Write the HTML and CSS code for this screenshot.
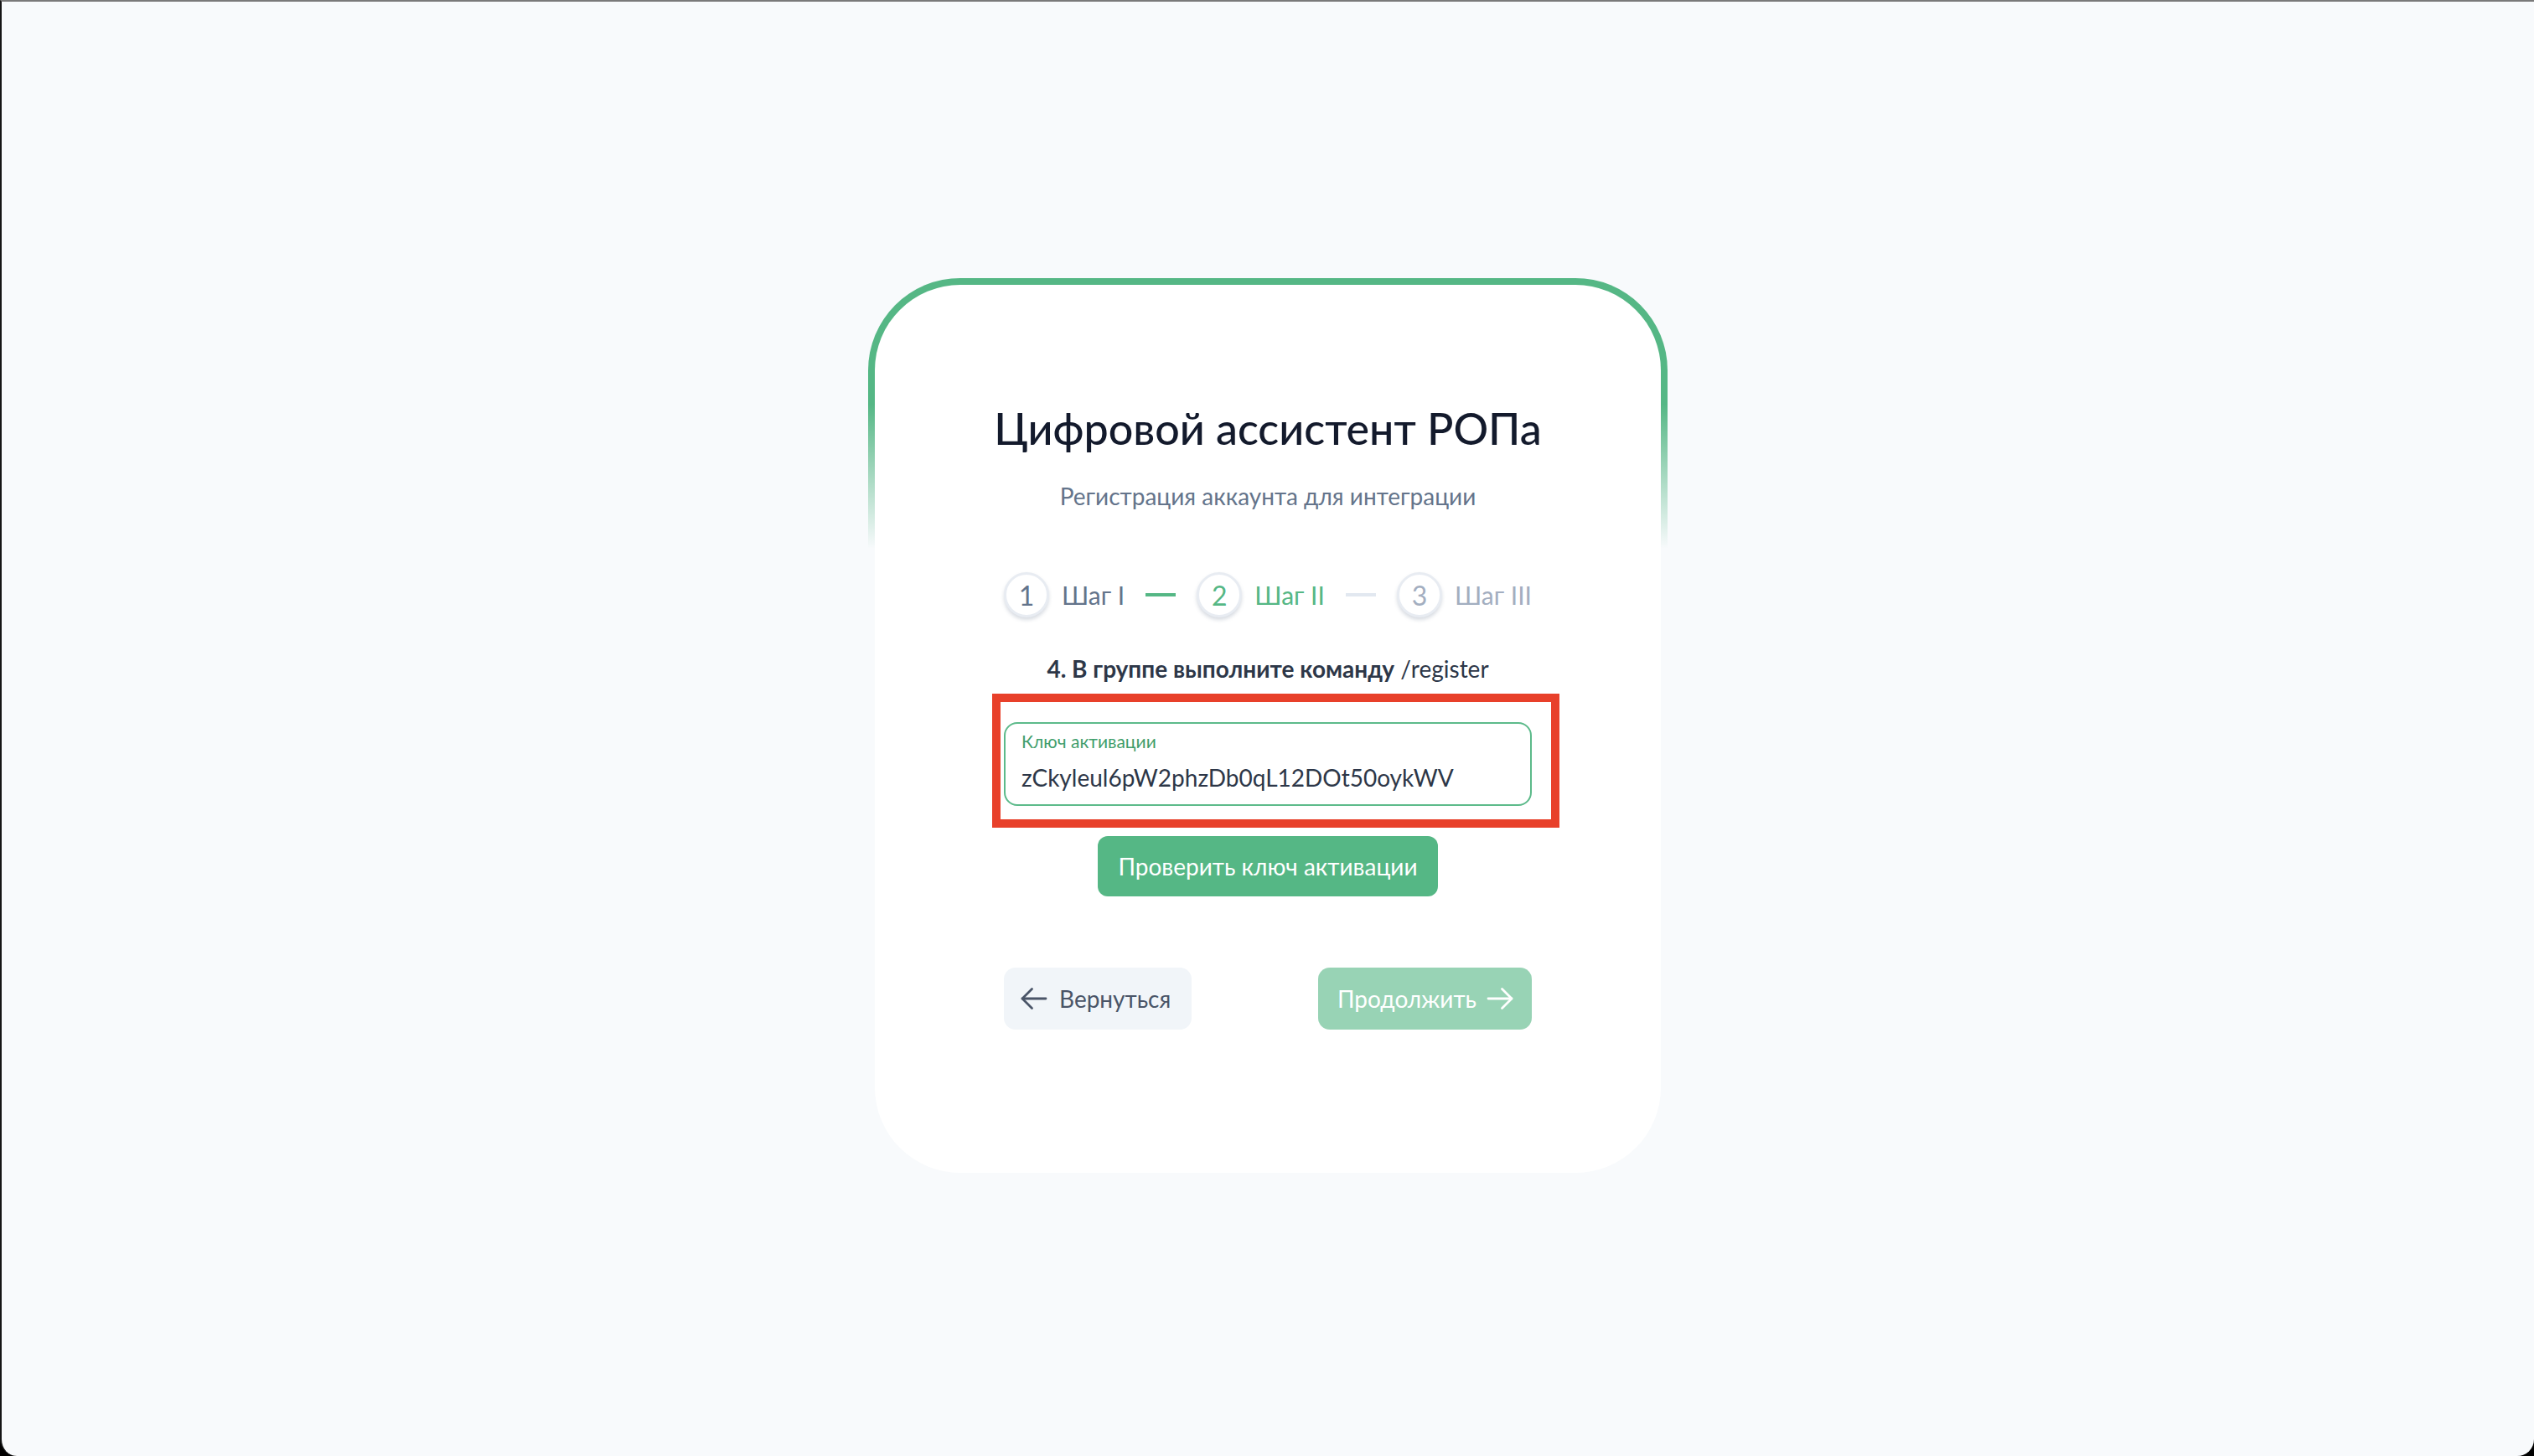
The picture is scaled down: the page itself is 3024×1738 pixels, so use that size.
FILE: index.html
```html
<!DOCTYPE html>
<html lang="ru">
<head>
  <meta charset="UTF-8">
  <title>Цифровой ассистент РОПа - Регистрация</title>
  <link rel="stylesheet" href="styles.css">
</head>
<body>
  <div class="window">
    <div class="frame">
      <div class="card">
        <h1 class="title">Цифровой ассистент РОПа</h1>
        <p class="subtitle">Регистрация аккаунта для интеграции</p>

        <div class="steps">
          <div class="step done">
            <span class="step-num">1</span>
            <span class="step-label">Шаг I</span>
          </div>
          <span class="step-line active"></span>
          <div class="step current">
            <span class="step-num">2</span>
            <span class="step-label">Шаг II</span>
          </div>
          <span class="step-line"></span>
          <div class="step todo">
            <span class="step-num">3</span>
            <span class="step-label">Шаг III</span>
          </div>
        </div>

        <p class="instruction"><b>4. В группе выполните команду</b> /register</p>

        <div class="field">
          <label class="field-label" for="activationKey">Ключ активации</label>
          <input class="field-input" id="activationKey" type="text" value="zCkyleul6pW2phzDb0qL12DOt50oykWV">
          <span class="highlight"></span>
        </div>

        <button class="btn btn-check">Проверить ключ активации</button>

        <div class="nav">
          <button class="btn btn-back">
            <svg width="32" height="32" viewBox="0 0 32 32" fill="none" stroke="currentColor" stroke-width="2.8" stroke-linecap="round" stroke-linejoin="round"><path d="M30 16H2"/><path d="M13.5 4.5L2 16l11.5 11.5"/></svg>
            Вернуться
          </button>
          <button class="btn btn-next" disabled>
            Продолжить
            <svg width="32" height="32" viewBox="0 0 32 32" fill="none" stroke="currentColor" stroke-width="2.8" stroke-linecap="round" stroke-linejoin="round"><path d="M2 16h28"/><path d="M18.5 4.5L30 16 18.5 27.5"/></svg>
          </button>
        </div>
      </div>
    </div>
  </div>
</body>
</html>
```

FILE: styles.css
```css
html, body {
  margin: 0;
  height: 100%;
  background: #000;
}
body {
  font-family: Lato, "Noto Sans", sans-serif;
  color: #2d3748;
}
.window {
  height: 100%;
  box-sizing: border-box;
  background: #f8fafc;
  border-top: 2px solid #7a7a7a;
  border-left: 2px solid #151515;
  border-radius: 0 0 20px 20px;
  display: flex;
  align-items: center;
  justify-content: center;
}

/* card with fading green edge */
.frame {
  padding: 8px;
  border-radius: 110px;
  background: linear-gradient(180deg, #55b785 14%, rgba(85, 183, 133, 0) 30%);
}
.card {
  width: 938px;
  box-sizing: border-box;
  padding: 141px 154px 171px;
  background: #fff;
  border-radius: 102px;
  display: flex;
  flex-direction: column;
  align-items: center;
}
.title {
  margin: 0;
  font-size: 52px;
  line-height: 60px;
  font-weight: 500;
  color: #131a2c;
  white-space: nowrap;
  text-align: center;
}
.subtitle {
  margin: 31px 0 0;
  font-size: 28px;
  line-height: 40px;
  color: #64748b;
}

.steps {
  margin-top: 70px;
  height: 56px;
  width: 100%;
  display: flex;
  align-items: center;
  justify-content: space-between;
}
.step { display: flex; align-items: center; gap: 15px; }
.step-num {
  width: 54px; height: 54px;
  box-sizing: border-box;
  border: 3px solid #e8ecf2;
  border-radius: 50%;
  box-shadow: 0 3px 4px rgba(100, 116, 139, 0.25);
  display: flex; align-items: center; justify-content: center;
  font-size: 32px;
  background: #fff;
}
.step-label { font-size: 30px; }
.step-line { width: 36px; height: 4px; background: #e2e8f0; }
.step-line.active { background: #55b785; }
.done { color: #64748b; }
.current { color: #55b785; }
.todo { color: #a3aec0; }

.instruction {
  margin: 40px 0 0;
  font-size: 28px;
  line-height: 40px;
  color: #2d3748;
}
.instruction b { font-weight: 700; }

.field {
  position: relative;
  margin-top: 44px;
  width: 100%;
  height: 100px;
  box-sizing: border-box;
  border: 2px solid #5cba8a;
  border-radius: 16px;
  padding: 8px 18px 12px 19px;
  display: flex;
  flex-direction: column;
}
.field-label {
  font-size: 21px;
  line-height: 26px;
  color: #3f9e6c;
  margin-bottom: 10px;
}
.field-input {
  border: none;
  outline: none;
  padding: 0;
  font-family: inherit;
  font-size: 28px;
  line-height: 40px;
  height: 40px;
  color: #2d3748;
  background: transparent;
}
.highlight {
  position: absolute;
  top: -36px; left: -16px; right: -35px; bottom: -28px;
  border: 10px solid #e8402a;
  pointer-events: none;
}

.btn {
  font-family: inherit;
  border: none;
  cursor: pointer;
  display: flex;
  align-items: center;
}
.btn-check {
  margin-top: 36px;
  height: 72px;
  padding: 0 24px;
  border-radius: 12px;
  background: #55b785;
  color: #fff;
  font-size: 28px;
}
.nav {
  margin-top: 85px;
  width: 100%;
  display: flex;
  justify-content: space-between;
}
.btn-back, .btn-next {
  height: 74px;
  border-radius: 14px;
  font-size: 28px;
}
.btn-back {
  gap: 14px;
  padding: 0 25px 0 20px;
  background: #f1f5f9;
  color: #4a5568;
}
.btn-next {
  gap: 12px;
  padding: 0 22px 0 23px;
  background: #55b785;
  color: #fff;
  opacity: 0.6;
  cursor: default;
}
```
